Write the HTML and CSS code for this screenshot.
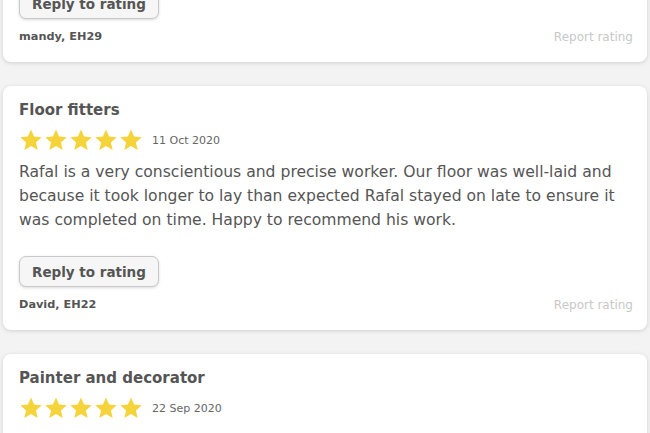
FILE: index.html
```html
<!DOCTYPE html>
<html>
<head>
  <title>Ratings</title>
  <link rel="stylesheet" href="styles.css">
</head>
<body>
  <div class="feed">
    <div class="rating-card">
      <h3 class="rating-title">Kitchen fitter</h3>
      <div class="rating-meta">
        <span class="stars">
          <svg viewBox="0 0 24 24"><path d="M12 1.5l3.1 7.1 7.6.7-5.8 5.1 1.8 7.5L12 17.9l-6.7 4 1.8-7.5-5.8-5.1 7.6-.7z"/></svg>
          <svg viewBox="0 0 24 24"><path d="M12 1.5l3.1 7.1 7.6.7-5.8 5.1 1.8 7.5L12 17.9l-6.7 4 1.8-7.5-5.8-5.1 7.6-.7z"/></svg>
          <svg viewBox="0 0 24 24"><path d="M12 1.5l3.1 7.1 7.6.7-5.8 5.1 1.8 7.5L12 17.9l-6.7 4 1.8-7.5-5.8-5.1 7.6-.7z"/></svg>
          <svg viewBox="0 0 24 24"><path d="M12 1.5l3.1 7.1 7.6.7-5.8 5.1 1.8 7.5L12 17.9l-6.7 4 1.8-7.5-5.8-5.1 7.6-.7z"/></svg>
          <svg viewBox="0 0 24 24"><path d="M12 1.5l3.1 7.1 7.6.7-5.8 5.1 1.8 7.5L12 17.9l-6.7 4 1.8-7.5-5.8-5.1 7.6-.7z"/></svg>
        </span>
        <span class="rating-date">2 Nov 2020</span>
      </div>
      <p class="rating-text">Excellent work, very professional.</p>
      <button class="reply-button">Reply to rating</button>
      <div class="rating-footer">
        <span class="rater">mandy, EH29</span>
        <a class="report-link">Report rating</a>
      </div>
    </div>

    <div class="rating-card">
      <h3 class="rating-title">Floor fitters</h3>
      <div class="rating-meta">
        <span class="stars">
          <svg viewBox="0 0 24 24"><path d="M12 1.5l3.1 7.1 7.6.7-5.8 5.1 1.8 7.5L12 17.9l-6.7 4 1.8-7.5-5.8-5.1 7.6-.7z"/></svg>
          <svg viewBox="0 0 24 24"><path d="M12 1.5l3.1 7.1 7.6.7-5.8 5.1 1.8 7.5L12 17.9l-6.7 4 1.8-7.5-5.8-5.1 7.6-.7z"/></svg>
          <svg viewBox="0 0 24 24"><path d="M12 1.5l3.1 7.1 7.6.7-5.8 5.1 1.8 7.5L12 17.9l-6.7 4 1.8-7.5-5.8-5.1 7.6-.7z"/></svg>
          <svg viewBox="0 0 24 24"><path d="M12 1.5l3.1 7.1 7.6.7-5.8 5.1 1.8 7.5L12 17.9l-6.7 4 1.8-7.5-5.8-5.1 7.6-.7z"/></svg>
          <svg viewBox="0 0 24 24"><path d="M12 1.5l3.1 7.1 7.6.7-5.8 5.1 1.8 7.5L12 17.9l-6.7 4 1.8-7.5-5.8-5.1 7.6-.7z"/></svg>
        </span>
        <span class="rating-date">11 Oct 2020</span>
      </div>
      <p class="rating-text">Rafal is a very conscientious and precise worker. Our floor was well-laid and because it took longer to lay than expected Rafal stayed on late to ensure it was completed on time. Happy to recommend his work.</p>
      <button class="reply-button">Reply to rating</button>
      <div class="rating-footer">
        <span class="rater">David, EH22</span>
        <a class="report-link">Report rating</a>
      </div>
    </div>

    <div class="rating-card">
      <h3 class="rating-title">Painter and decorator</h3>
      <div class="rating-meta">
        <span class="stars">
          <svg viewBox="0 0 24 24"><path d="M12 1.5l3.1 7.1 7.6.7-5.8 5.1 1.8 7.5L12 17.9l-6.7 4 1.8-7.5-5.8-5.1 7.6-.7z"/></svg>
          <svg viewBox="0 0 24 24"><path d="M12 1.5l3.1 7.1 7.6.7-5.8 5.1 1.8 7.5L12 17.9l-6.7 4 1.8-7.5-5.8-5.1 7.6-.7z"/></svg>
          <svg viewBox="0 0 24 24"><path d="M12 1.5l3.1 7.1 7.6.7-5.8 5.1 1.8 7.5L12 17.9l-6.7 4 1.8-7.5-5.8-5.1 7.6-.7z"/></svg>
          <svg viewBox="0 0 24 24"><path d="M12 1.5l3.1 7.1 7.6.7-5.8 5.1 1.8 7.5L12 17.9l-6.7 4 1.8-7.5-5.8-5.1 7.6-.7z"/></svg>
          <svg viewBox="0 0 24 24"><path d="M12 1.5l3.1 7.1 7.6.7-5.8 5.1 1.8 7.5L12 17.9l-6.7 4 1.8-7.5-5.8-5.1 7.6-.7z"/></svg>
        </span>
        <span class="rating-date">22 Sep 2020</span>
      </div>
      <p class="rating-text">Very neat and tidy work, finished the whole flat within the week.</p>
      <button class="reply-button">Reply to rating</button>
      <div class="rating-footer">
        <span class="rater">Fiona, EH10</span>
        <a class="report-link">Report rating</a>
      </div>
    </div>
  </div>
</body>
</html>
```
FILE: styles.css
```css
body { margin: 0; padding: 0; background-color: #f3f3f3; font-family: "DejaVu Sans", sans-serif; color: #555; overflow: hidden; }
.feed { display: flex; flex-direction: column; gap: 24px; padding: 0 3px; margin-top: -134px; }
.rating-card { background-color: #fff; border-radius: 8px; box-shadow: 0 1px 4px rgba(0, 0, 0, 0.15); padding: 14px 14px 17px 16px; }
.rating-title { margin: 0; font-size: 15px; line-height: 20px; font-weight: bold; color: #555; }
.rating-meta { display: flex; align-items: center; margin-top: 8px; height: 24px; }
.stars { display: flex; gap: 1px; }
.stars svg { width: 24px; height: 24px; fill: #f5d33b; display: block; }
.rating-date { margin-left: 9px; font-size: 11px; color: #666; }
.rating-text { margin: 8px 0 0; font-size: 15.6px; line-height: 24px; color: #555; }
.reply-button { margin-top: 24px; font-family: inherit; font-size: 13.5px; font-weight: bold; color: #555; background-color: #f6f6f6; border: 1px solid #c9c9c9; border-radius: 7px; padding: 0 12px; height: 31px; box-shadow: 0 1px 3px rgba(0, 0, 0, 0.15); }
.rating-footer { display: flex; justify-content: space-between; align-items: center; margin-top: 10px; line-height: 16px; font-size: 11.3px; }
.rater { font-weight: bold; color: #555; }
.report-link { color: #c8c8c8; font-size: 12px; }
```
